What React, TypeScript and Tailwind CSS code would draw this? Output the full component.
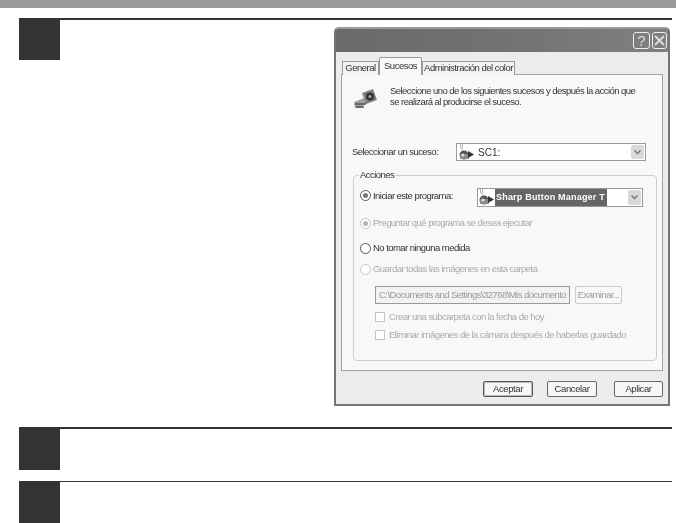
const SANS = "font-['Liberation_Sans',Arial,sans-serif]";

function Radio({ checked, dim }: { checked?: boolean; dim?: boolean }) {
  return (
    <span
      className={`flex h-[11px] w-[11px] shrink-0 items-center justify-center rounded-full border bg-white ${
        dim ? "border-[#c4c4c4]" : "border-[#555]"
      }`}
    >
      {checked && <span className={`h-[5px] w-[5px] rounded-full ${dim ? "bg-[#b5b5b5]" : "bg-[#777]"}`} />}
    </span>
  );
}

function ProgramIcon() {
  return (
    <svg width="17" height="17" viewBox="0 0 17 17" className="shrink-0">
      <path d="M2 1h4M2 3h3M3 4l3 3" fill="none" stroke="#666" strokeWidth="1" strokeDasharray="1 1" />
      <circle cx="6" cy="11" r="4.5" fill="#555" />
      <rect x="2" y="10" width="9" height="5" rx="1" fill="#8a8a8a" />
      <path d="M10 7l6 3.5-6 3.5z" fill="#333" />
      <circle cx="5" cy="11" r="1.5" fill="#ddd" />
    </svg>
  );
}

function Chevron({ box }: { box: string }) {
  return (
    <span className={`flex items-center justify-center rounded-[2px] bg-[#d9d9d9] ${box}`}>
      <svg width="9" height="7" viewBox="0 0 9 7">
        <path d="M1.5 1.5 4.5 4.5 7.5 1.5" fill="none" stroke="#777" strokeWidth="1.5" />
      </svg>
    </span>
  );
}

function WinButton({ label, width, strong }: { label: string; width: string; strong?: boolean }) {
  return (
    <button
      className={`flex h-[16px] items-center justify-center rounded-[2px] border bg-[#f6f6f6] text-[9.5px] tracking-[-0.4px] text-[#333] ${width} ${
        strong ? "border-[#555] shadow-[inset_0_0_0_1px_#bbb]" : "border-[#666]"
      }`}
    >
      {label}
    </button>
  );
}

function Dialog() {
  return (
    <div className={`${SANS} flex h-[379px] w-[336px] flex-col overflow-hidden rounded-t-[5px] border-x-2 border-b-2 border-[#757575] bg-[#ececec] whitespace-nowrap blur-[0.4px]`}>
      {/* title bar */}
      <div className="flex h-[25px] shrink-0 items-center justify-end gap-[2px] border-t-2 border-[#9a9a9a] bg-gradient-to-r from-[#6a6a6a] via-[#727272] to-[#808080] pr-[1px]">
        <span className="flex h-[17px] w-[17px] items-center justify-center rounded-[3px] border border-[#eee] text-[15px] leading-none text-[#ddd]">?</span>
        <span className="flex h-[17px] w-[15px] items-center justify-center rounded-[3px] border border-[#eee]">
          <svg width="11" height="11" viewBox="0 0 11 11">
            <path d="M1 1l9 9M10 1l-9 9" stroke="#ddd" strokeWidth="2" />
          </svg>
        </span>
      </div>

      <div className="flex flex-1 flex-col pl-[5px] pr-[5px] pt-[5px]">
        {/* tabs */}
        <div className="relative z-10 -mb-px flex h-[18px] items-end pl-px text-[9.5px] tracking-[-0.5px] text-[#333]">
          <div className="flex h-[14px] w-[37px] items-center justify-center border border-b-0 border-[#999] bg-[#f2f2f2]">General</div>
          <div className="flex h-[18px] w-[43px] items-start justify-center rounded-t-[2px] border border-b-0 border-[#999] bg-[#f8f8f8] pt-[1px]">Sucesos</div>
          <div className="flex h-[14px] w-[93px] items-center justify-center border border-b-0 border-[#999] bg-[#f2f2f2]">Administración del color</div>
        </div>

        {/* panel */}
        <div className="h-[297px] border border-[#a3a3a3] bg-[#f8f8f8] text-[9.5px] tracking-[-0.55px] text-[#333]">
          <div className="flex pl-[11px] pt-[10px]">
            <svg width="24" height="21" viewBox="0 0 24 21" className="mt-[3px] shrink-0">
              <path d="M1 14 11 10l4 4-8 6H2z" fill="#a0a0a0" />
              <path d="M2 16h11M3 19h8" stroke="#555" strokeWidth="1.5" />
              <path d="M9 5l11-4 4 11-11 4z" fill="#808080" />
              <circle cx="17" cy="8.5" r="4" fill="#333" />
              <circle cx="17" cy="8.5" r="1.5" fill="#aaa" />
            </svg>
            <p className="ml-[13px] leading-[11px]">
              Seleccione uno de los siguientes sucesos y después la acción que
              <br />
              se realizará al producirse el suceso.
            </p>
          </div>

          <div className="mt-[34px] flex items-center pl-[10px]">
            <span className="w-[104px]">Seleccionar un suceso:</span>
            <div className="flex h-[18px] w-[190px] items-center border border-[#999] bg-white pl-px pr-px">
              <ProgramIcon />
              <span className="ml-[3px] flex-1 text-[10px] tracking-normal">SC1:</span>
              <Chevron box="h-[14px] w-[13px]" />
            </div>
          </div>

          <div className="ml-[11px] mt-[14px] h-[186px] w-[304px] rounded-[4px] border border-[#cfcfcf]">
            <div className="-mt-[7px] ml-[5px] w-fit bg-[#f8f8f8] px-px leading-[11px]">Acciones</div>

            <div className="mt-[8px] flex h-[19px] pl-[6px]">
              <div className="mt-[2px] flex w-[117px] items-start gap-[2px]">
                <Radio checked />
                <span className="leading-[11px]">Iniciar este programa:</span>
              </div>
              <div className="flex w-[166px] items-center border border-[#999] bg-white pr-px">
                <ProgramIcon />
                <span className="flex h-full w-[112px] items-center bg-[#666] pl-px text-[9px] font-bold tracking-[0.2px] text-white">Sharp Button Manager T</span>
                <span className="flex-1" />
                <Chevron box="h-[15px] w-[13px]" />
              </div>
            </div>

            <div className="mt-[10px] flex h-[12px] items-center gap-[2px] pl-[6px] text-[#aaa]">
              <Radio checked dim />
              <span>Preguntar qué programa se desea ejecutar</span>
            </div>
            <div className="mt-[13px] flex h-[12px] items-center gap-[2px] pl-[6px]">
              <Radio />
              <span>No tomar ninguna medida</span>
            </div>
            <div className="mt-[9px] flex h-[12px] items-center gap-[2px] pl-[6px] text-[#aaa]">
              <Radio dim />
              <span>Guardar todas las imágenes en esta carpeta</span>
            </div>

            <div className="mt-[11px] flex gap-[5px] pl-[21px] text-[#999]">
              <div className="flex h-[18px] w-[195px] items-center overflow-hidden border border-[#999] bg-[#f2f2f2] pl-[3px]">C:\Documents and Settings\32768\Mis documento</div>
              <div className="flex h-[18px] w-[47px] items-center justify-center rounded-[2px] border border-[#ccc]">Examinar...</div>
            </div>

            <div className="mt-[8px] flex h-[10px] items-center gap-[4px] pl-[21px] text-[#aaa]">
              <span className="h-[10px] w-[10px] border border-[#c4c4c4] bg-white" />
              <span>Crear una subcarpeta con la fecha de hoy</span>
            </div>
            <div className="mt-[8px] flex h-[10px] items-center gap-[4px] pl-[21px] text-[#aaa]">
              <span className="h-[10px] w-[10px] border border-[#c4c4c4] bg-white" />
              <span>Eliminar imágenes de la cámara después de haberlas guardado</span>
            </div>
          </div>
        </div>

        {/* buttons */}
        <div className="mt-[10px] flex justify-end gap-[14px]">
          <WinButton label="Aceptar" width="w-[50px]" strong />
          <WinButton label="Cancelar" width="w-[50px] mr-[3px]" />
          <WinButton label="Aplicar" width="w-[49px]" />
        </div>
      </div>
    </div>
  );
}

export default function App() {
  return (
    <div className="h-[523px] w-[676px] overflow-hidden bg-white">
      <div className="h-2 bg-[#9a9a9a]" />
      <div className="pl-[19px] pr-[4px] pt-[10px]">
        <div className="flex">
          <div className="h-[42px] w-[41px] shrink-0 bg-[#333]" />
          <div className="flex-1 border-t-2 border-[#333] pt-[7px]">
            <div className="flex justify-end pr-[2px]">
              <Dialog />
            </div>
          </div>
        </div>

        <div className="mt-[21px] flex">
          <div className="h-[43px] w-[41px] shrink-0 bg-[#333]" />
          <div className="flex-1 border-t-2 border-[#333]" />
        </div>

        <div className="mt-[11px] flex">
          <div className="h-[42px] w-[41px] shrink-0 bg-[#333]" />
          <div className="flex-1 border-t border-[#333]" />
        </div>
      </div>
    </div>
  );
}
